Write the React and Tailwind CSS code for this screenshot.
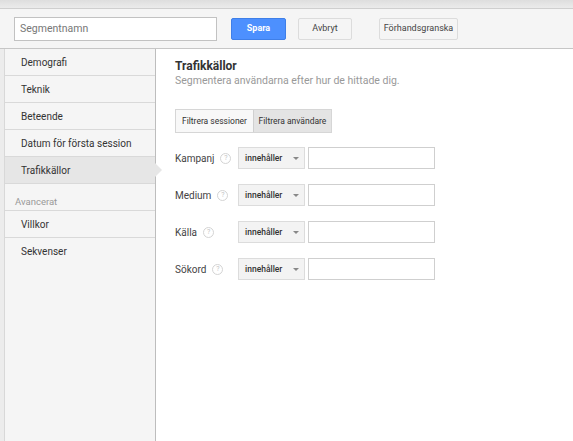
import React from 'react'

const menu = ['Demografi', 'Teknik', 'Beteende', 'Datum för första session', 'Trafikkällor']
const rows = ['Kampanj', 'Medium', 'Källa', 'Sökord']

function Help() {
  return (
    <span className="ml-[6px] inline-flex h-[11px] w-[11px] items-center justify-center rounded-full border border-[#d4d4d4] text-[7px] leading-none text-[#c4c4c4]">
      ?
    </span>
  )
}

export default function App() {
  return (
    <div className="flex h-[441px] w-[573px] flex-col overflow-hidden bg-white text-[#333]" style={{ fontFamily: 'Roboto, "Liberation Sans", Arial, sans-serif' }}>
      <div className="h-[9px] shrink-0 border-b border-[#cfcfcf] bg-gradient-to-b from-[#dedede] to-[#ebebeb]" />
      <div className="flex h-[40px] shrink-0 items-center border-b border-[#c6c6c6] bg-[#f5f5f5] pl-[14px]">
        <div className="flex h-[24px] w-[203px] items-center border border-[#c2c2c2] bg-white px-[5px] text-[10.5px] text-[#777]">
          Segmentnamn
        </div>
        <button className="ml-[14px] h-[22px] w-[55px] rounded-[2px] border border-[#3f7fe8] bg-[#4d90fe] text-[9px] font-bold text-white">
          Spara
        </button>
        <button className="ml-[12px] h-[22px] w-[54px] rounded-[2px] border border-[#dcdcdc] bg-[#f5f5f5] text-[9px] text-[#444]">
          Avbryt
        </button>
        <button className="ml-[27px] h-[22px] w-[79px] rounded-[2px] border border-[#dcdcdc] bg-[#f5f5f5] text-[9px] text-[#444]">
          Förhandsgranska
        </button>
      </div>
      <div className="flex min-h-0 flex-1">
        <div className="w-[5px] shrink-0 border-r border-[#d8d8d8] bg-[#ececec]" />
        <div className="w-[151px] shrink-0 border-r border-[#bdbdbd] bg-[#f5f5f5]">
          {menu.map((m, i) => (
            <div
              key={m}
              className={`relative flex h-[27px] items-center border-b border-[#d9d9d9] pl-[16px] text-[10px] ${
                i === 4 ? 'bg-[#e6e6e6]' : ''
              }`}
            >
              {m}
              {i === 4 && (
                <span className="absolute right-[-7px] top-[6px] h-0 w-0 border-y-[7px] border-l-[7px] border-y-transparent border-l-[#e6e6e6]" />
              )}
            </div>
          ))}
          <div className="flex h-[27px] items-end border-b border-[#d9d9d9] pb-[1px] pl-[10px] text-[9.5px] text-[#999]">
            Avancerat
          </div>
          <div className="flex h-[27px] items-center border-b border-[#d9d9d9] pl-[16px] text-[10px]">Villkor</div>
          <div className="flex h-[27px] items-center pl-[16px] text-[10px]">Sekvenser</div>
        </div>
        <div className="flex-1 pl-[19px] pt-[10px]">
          <div className="text-[12px] font-bold leading-[15px] text-[#333]">Trafikkällor</div>
          <div className="text-[10.5px] leading-[14px] text-[#999]">Segmentera användarna efter hur de hittade dig.</div>
          <div className="mt-[21px] flex h-[24px] w-[157px] border border-[#d6d6d6] text-[8.5px]">
            <div className="flex w-[77px] items-center justify-center bg-[#f8f8f8] text-[#333]">Filtrera sessioner</div>
            <div className="flex flex-1 items-center justify-center border-l border-[#d0d0d0] bg-[#e4e4e4] text-[#333]">
              Filtrera användare
            </div>
          </div>
          <div className="mt-[14px] flex flex-col gap-[15px]">
            {rows.map((r) => (
              <div key={r} className="flex h-[22px] items-center">
                <div className="flex w-[63px] items-center text-[10px] text-[#444]">
                  {r}
                  <Help />
                </div>
                <div className="flex h-[22px] w-[67px] items-center border border-[#dcdcdc] bg-[#f3f3f3] pl-[6px] text-[8.5px] font-medium text-[#333]">
                  innehåller
                  <span className="ml-[11px] h-0 w-0 border-x-[3px] border-t-[3px] border-x-transparent border-t-[#888]" />
                </div>
                <div className="ml-[3px] h-[22px] w-[127px] border border-[#cfcfcf] bg-white" />
              </div>
            ))}
          </div>
        </div>
      </div>
    </div>
  )
}
